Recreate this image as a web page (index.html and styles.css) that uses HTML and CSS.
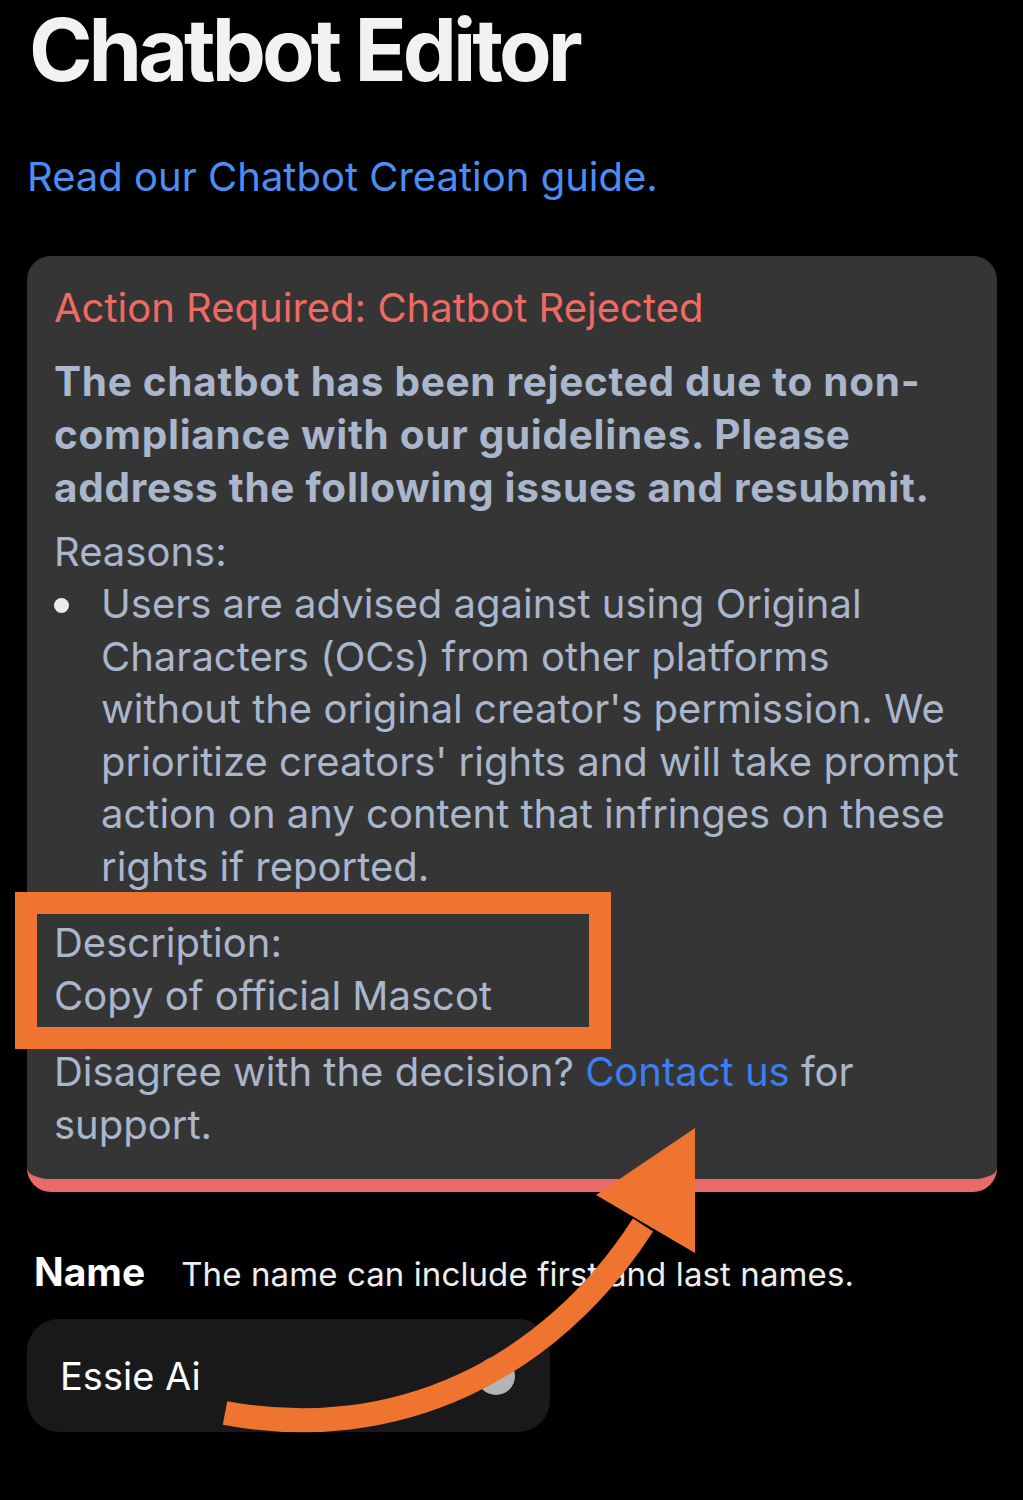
FILE: index.html
```html
<!DOCTYPE html>
<html lang="en">

<head>
    <meta charset="UTF-8">
    <meta name="viewport" content="width=device-width, initial-scale=1.0">
    <title>Chatbot Editor</title>
    <link rel="stylesheet" href="styles.css">
</head>

<body>
    <div class="page">
        <h1>Chatbot Editor</h1>

        <a class="guide" href="#">Read our Chatbot Creation guide.</a>

        <!-- Rejection notice -->
        <div class="notice">
            <div class="notice-title">Action Required: Chatbot Rejected</div>
            <p class="notice-lead">The chatbot has been rejected due to non-compliance with our guidelines. Please address the following issues and resubmit.</p>

            <div class="notice-label">Reasons:</div>
            <ul class="reasons">
                <li>Users are advised against using Original Characters (OCs) from other platforms without the original creator's permission. We prioritize creators' rights and will take prompt action on any content that infringes on these rights if reported.</li>
            </ul>

            <div class="description">
                <div>Description:</div>
                <div>Copy of official Mascot</div>
                <span class="highlight"></span>
            </div>

            <p class="support">Disagree with the decision? <a href="#">Contact us</a> for support.</p>
        </div>

        <!-- Name field -->
        <div class="field-head">
            <span class="field-name">Name</span>
            <span class="field-hint">The name can include first and last names.</span>
        </div>
        <div class="field-input">
            <span>Essie Ai</span>
            <span class="clear"></span>
        </div>
    </div>

    <!-- annotation arrow -->
    <svg class="arrow" width="1023" height="1500" viewBox="0 0 1023 1500">
        <path d="M225 1413 C 395 1445, 550 1370, 643 1225" fill="none" stroke="#ee7430" stroke-width="24" />
        <polygon points="596,1195 695,1128 695,1253" fill="#ee7430" />
    </svg>
</body>

</html>
```

FILE: styles.css
```css
body {
    margin: 0;
    background-color: #000;
    font-family: Inter, "Noto Sans", sans-serif;
    color: #fff;
    position: relative;
}

.page {
    padding: 7px 26px 80px 27px;
}

h1 {
    margin: 0 0 0 2px;
    font-size: 86px;
    font-weight: 700;
    line-height: 1;
    letter-spacing: -4px;
    color: #f2f2f2;
}

.guide {
    display: block;
    margin-top: 58px;
    font-size: 40px;
    line-height: 52px;
    color: #4b8ef3;
    text-decoration: none;
}

.notice {
    margin-top: 53px;
    padding: 26px 34px 28px 27px;
    background-color: #353535;
    border-radius: 24px;
    border-bottom: 13px solid #e96a6a;
    font-size: 40px;
    line-height: 52.5px;
    color: #a9b6cc;
}

.notice-title {
    color: #ef6a62;
    margin-bottom: 20px;
}

.notice-lead {
    margin: 0 0 12px;
    font-weight: 700;
    font-size: 40.5px;
    letter-spacing: 0.7px;
    line-height: 53px;
}

.reasons {
    margin: 0;
    padding-left: 47px;
    list-style: none;
}

.reasons li {
    position: relative;
}

.reasons li::before {
    content: "";
    position: absolute;
    left: -47px;
    top: 20px;
    width: 15px;
    height: 15px;
    border-radius: 50%;
    background-color: #e8ecf2;
}

.description {
    position: relative;
    margin-top: 24px;
}

.highlight {
    position: absolute;
    left: -39px;
    top: -25px;
    width: 596px;
    height: 157px;
    box-sizing: border-box;
    border: 22px solid #ee7430;
}

.support {
    margin: 24px 0 0;
}

.support a {
    color: #3c7ef1;
    text-decoration: none;
}

.field-head {
    margin-top: 56px;
    padding-left: 7px;
    display: flex;
    align-items: baseline;
    gap: 36px;
}

.field-name {
    font-size: 39px;
    font-weight: 700;
}

.field-hint {
    font-size: 33px;
    letter-spacing: 0.1px;
    color: #eee;
}

.field-input {
    margin-top: 24px;
    width: 523px;
    height: 113px;
    box-sizing: border-box;
    padding: 0 35px 0 33px;
    background-color: #19191b;
    border-radius: 32px;
    display: flex;
    align-items: center;
    justify-content: space-between;
    font-size: 38px;
}

.clear {
    width: 38px;
    height: 38px;
    border-radius: 50%;
    background-color: #b4b4b4;
}

.arrow {
    position: absolute;
    left: 0;
    top: 0;
    pointer-events: none;
}
```
